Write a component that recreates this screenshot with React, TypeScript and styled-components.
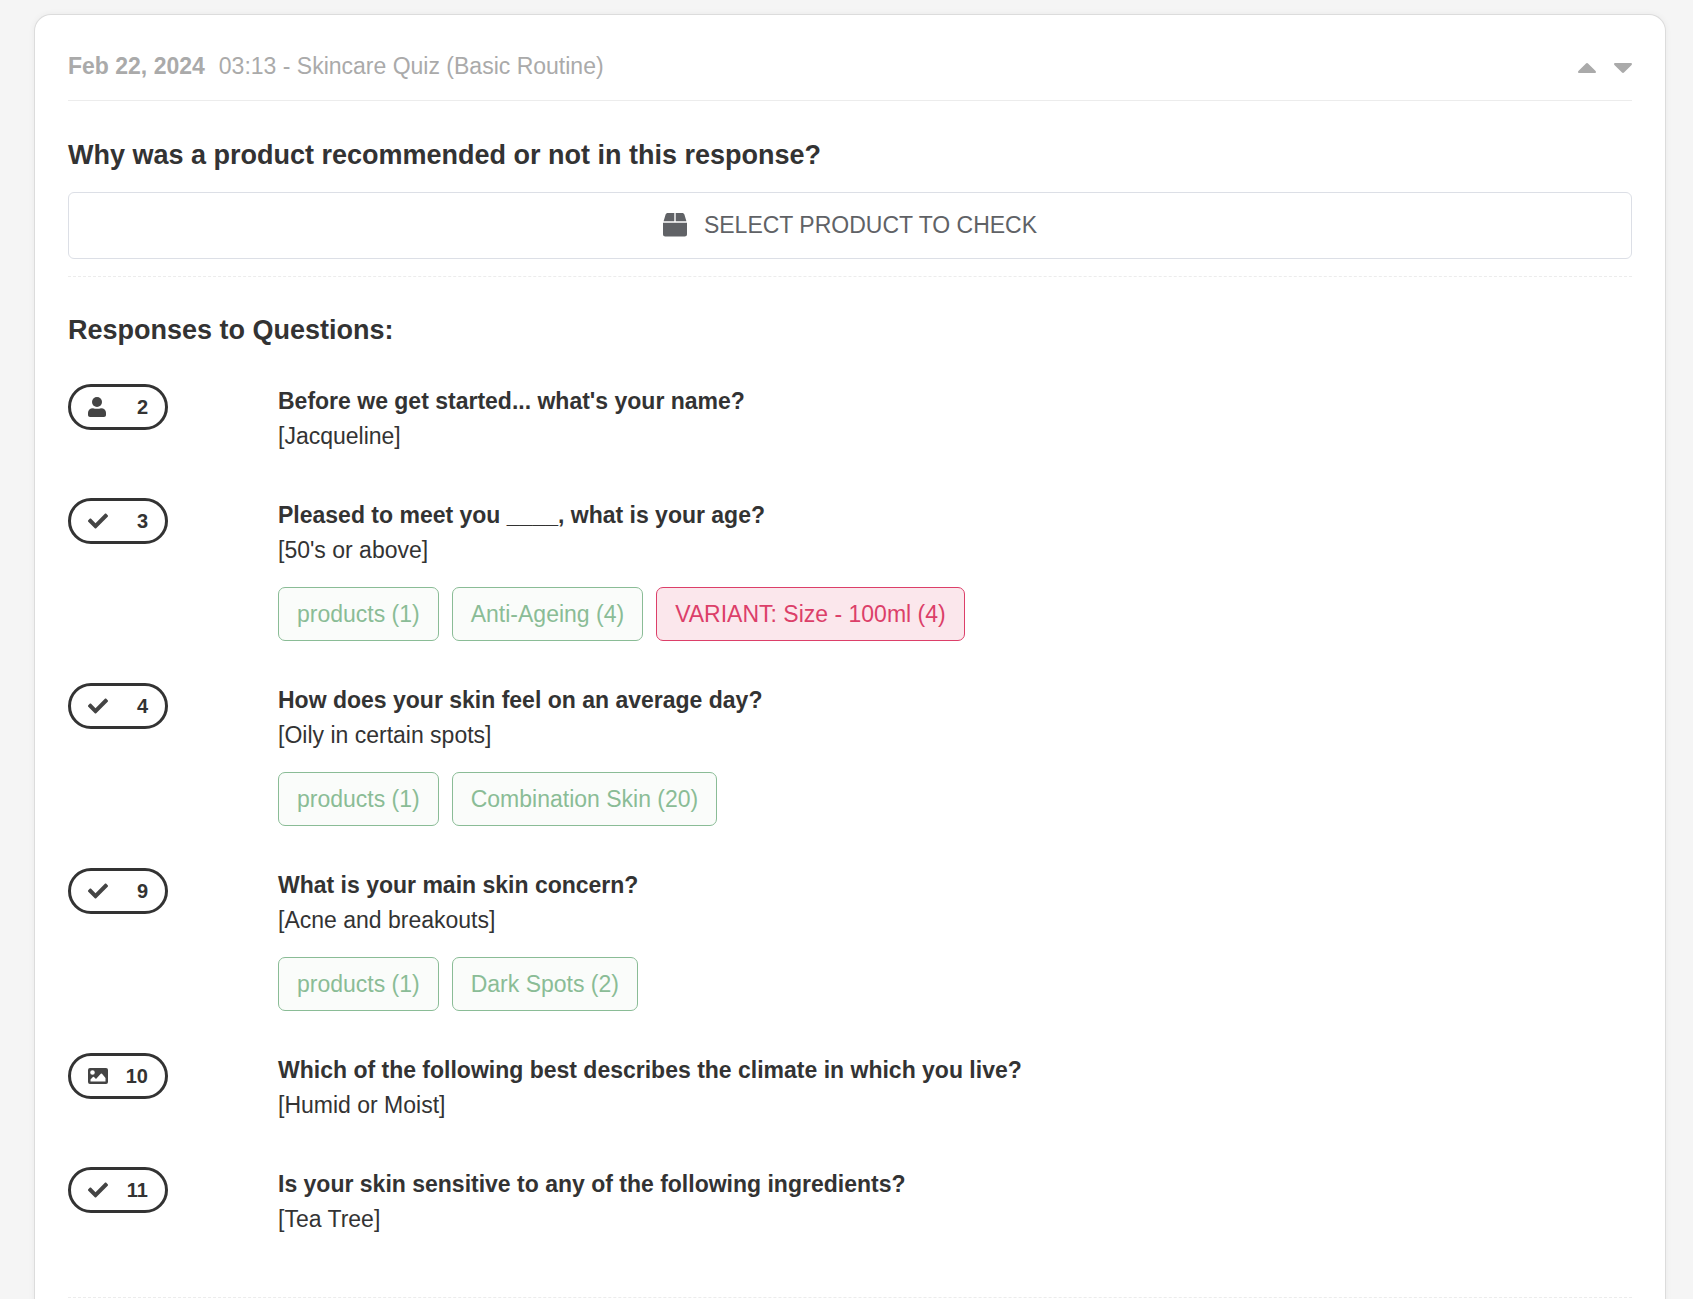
import React from "react";
import styled, { createGlobalStyle, css } from "styled-components";
import { FaCheck } from "react-icons/fa";

const GlobalStyle = createGlobalStyle`
  *, *::before, *::after { box-sizing: border-box; }
  body {
    margin: 0;
    background: #f5f5f5;
    color: #333;
    font-family: "Liberation Sans", Arial, sans-serif;
    font-size: 23px;
    line-height: 35px;
  }
`;

const Page = styled.main`
  padding: 14px 27px 0 34px;
`;

const Card = styled.article`
  padding: 34px 33px 64px;
  background: #fff;
  border: 1px solid #dcdcdc;
  border-bottom: 0;
  border-radius: 17px 17px 0 0;
  box-shadow: 0 0 6px rgba(0, 0, 0, 0.05);
`;

const Header = styled.header`
  display: flex;
  justify-content: space-between;
  align-items: center;
  padding-bottom: 16px;
  border-bottom: 1px solid #ececec;
  color: #aaa;
`;

const Meta = styled.div`
  display: flex;
  gap: 14px;
`;

const Arrows = styled.div`
  display: flex;
  gap: 18px;
`;

const ArrowButton = styled.button`
  display: flex;
  padding: 2px 0 0;
  border: 0;
  background: none;
  color: inherit;
  cursor: pointer;
`;

const Title = styled.h2`
  margin: 0;
  font-size: 27px;
  line-height: 40px;
  font-weight: 700;
`;

const CheckSection = styled.section`
  display: flex;
  flex-direction: column;
  gap: 17px;
  padding: 34px 0 17px;
  border-bottom: 1px dashed #ececec;
`;

const SelectButton = styled.button`
  display: flex;
  align-items: center;
  justify-content: center;
  gap: 17px;
  width: 100%;
  height: 67px;
  border: 1px solid #dcdfe6;
  border-radius: 6px;
  background: #fff;
  color: #606266;
  font: inherit;
  text-transform: uppercase;
  cursor: pointer;
`;

const ResponsesSection = styled.section`
  padding: 33px 0 60px;
  border-bottom: 1px dashed #ececec;
`;

const ResponseList = styled.ol`
  display: flex;
  flex-direction: column;
  gap: 44px;
  margin: 34px 0 0;
  padding: 0;
  list-style: none;
`;

const ResponseRow = styled.li`
  display: grid;
  grid-template-columns: 210px 1fr;
  align-items: start;
`;

const Badge = styled.div`
  display: flex;
  align-items: center;
  justify-content: space-between;
  width: 100px;
  height: 46px;
  padding: 0 17px;
  border: 3px solid #333;
  border-radius: 23px;
  font-size: 20px;
  font-weight: 700;

  svg { color: #444; }
`;

const Question = styled.h3`
  margin: 0;
  font-size: 23px;
  font-weight: 700;
`;

const Answer = styled.p`
  margin: 0;
`;

const Chips = styled.ul`
  display: flex;
  flex-wrap: wrap;
  gap: 13px;
  margin: 19px 0 -2px;
  padding: 0;
  list-style: none;
`;

const Chip = styled.li<{ $variant?: boolean }>`
  padding: 9px 18px 8px;
  border: 1px solid;
  border-radius: 7px;
  ${({ $variant }) =>
    $variant
      ? css`
          border-color: #dc3f69;
          background: #fbe7ec;
          color: #dc3f69;
        `
      : css`
          border-color: #8abc96;
          background: #fafcfa;
          color: #8abc96;
        `}
`;

const CaretUp = () => (
  <svg width="18" height="10" viewBox="0 0 18 10" fill="currentColor" aria-hidden="true">
    <path d="M8 .5a1.4 1.4 0 0 1 2 0l7.6 7.6c.7.8.3 1.9-.8 1.9H1.2C.1 10-.3 8.900.4 8.100z" />
  </svg>
);

const CaretDown = () => (
  <svg width="18" height="10" viewBox="0 0 18 10" fill="currentColor" aria-hidden="true">
    <path d="M8 9.500a1.400 1.400 0 0 0 2 0l7.600-7.600C18.300 1.100 17.900 0 16.800 0H1.200C.1 0-.3 1.100.4 1.900z" />
  </svg>
);

const BoxIcon = () => (
  <svg width="24" height="26" viewBox="0 0 24 26" fill="currentColor" aria-hidden="true">
    <path d="M11.300 0v8.300H.6L2.600 1.600C2.900.6 3.800 0 4.800 0zM12.700 0v8.300h10.700L21.400 1.600C21.100.6 20.200 0 19.200 0zM0 9.700h24v11.600c0 1.300-1 2.300-2.300 2.300H2.300C1 23.600 0 22.600 0 21.300z" />
  </svg>
);

const UserIcon = () => (
  <svg width="18" height="20" viewBox="0 0 18 20" fill="currentColor" aria-hidden="true">
    <circle cx="9" cy="5" r="5" />
    <path d="M5 11.200c1.200.4 2.500.6 4 .6s2.800-.2 4-.6c3 0 5 1.900 5 4.600V18c0 1.100-.9 2-2 2H2c-1.100 0-2-.9-2-2v-2.200c0-2.700 2-4.600 5-4.600z" />
  </svg>
);

const ImageIcon = () => (
  <svg width="20" height="16" viewBox="0 0 20 16" fill="currentColor" aria-hidden="true">
    <path
      fillRule="evenodd"
      d="M2 0h16a2 2 0 0 1 2 2v12a2 2 0 0 1-2 2H2a2 2 0 0 1-2-2V2a2 2 0 0 1 2-2zM4.500 2.200a2.300 2.300 0 1 0 0 4.600 2.300 2.300 0 0 0 0-4.600zM2.500 13.500h15V10L14 5.800a.8.8 0 0 0-1.200 0L8 11 6 9a.8.8 0 0 0-1.100 0l-2.400 2.500z"
    />
  </svg>
);

const icons = {
  user: <UserIcon />,
  check: <FaCheck size={20} aria-hidden="true" />,
  image: <ImageIcon />,
};

type Response = {
  step: number;
  icon: keyof typeof icons;
  question: string;
  answer: string;
  chips?: { label: string; variant?: boolean }[];
};

const responses: Response[] = [
  { step: 2, icon: "user", question: "Before we get started... what's your name?", answer: "[Jacqueline]" },
  {
    step: 3,
    icon: "check",
    question: "Pleased to meet you ____, what is your age?",
    answer: "[50's or above]",
    chips: [
      { label: "products (1)" },
      { label: "Anti-Ageing (4)" },
      { label: "VARIANT: Size - 100ml (4)", variant: true },
    ],
  },
  {
    step: 4,
    icon: "check",
    question: "How does your skin feel on an average day?",
    answer: "[Oily in certain spots]",
    chips: [{ label: "products (1)" }, { label: "Combination Skin (20)" }],
  },
  {
    step: 9,
    icon: "check",
    question: "What is your main skin concern?",
    answer: "[Acne and breakouts]",
    chips: [{ label: "products (1)" }, { label: "Dark Spots (2)" }],
  },
  {
    step: 10,
    icon: "image",
    question: "Which of the following best describes the climate in which you live?",
    answer: "[Humid or Moist]",
  },
  {
    step: 11,
    icon: "check",
    question: "Is your skin sensitive to any of the following ingredients?",
    answer: "[Tea Tree]",
  },
];

export default function App() {
  return (
    <Page>
      <GlobalStyle />
      <Card>
        <Header>
          <Meta>
            <strong>Feb 22, 2024</strong>
            <span>03:13 - Skincare Quiz (Basic Routine)</span>
          </Meta>
          <Arrows>
            <ArrowButton type="button" aria-label="Previous response">
              <CaretUp />
            </ArrowButton>
            <ArrowButton type="button" aria-label="Next response">
              <CaretDown />
            </ArrowButton>
          </Arrows>
        </Header>

        <CheckSection>
          <Title>Why was a product recommended or not in this response?</Title>
          <SelectButton type="button">
            <BoxIcon />
            Select product to check
          </SelectButton>
        </CheckSection>

        <ResponsesSection>
          <Title>Responses to Questions:</Title>
          <ResponseList>
            {responses.map(({ step, icon, question, answer, chips }) => (
              <ResponseRow key={step}>
                <Badge>
                  {icons[icon]}
                  {step}
                </Badge>
                <div>
                  <Question>{question}</Question>
                  <Answer>{answer}</Answer>
                  {chips && (
                    <Chips>
                      {chips.map(({ label, variant }) => (
                        <Chip key={label} $variant={variant}>
                          {label}
                        </Chip>
                      ))}
                    </Chips>
                  )}
                </div>
              </ResponseRow>
            ))}
          </ResponseList>
        </ResponsesSection>
      </Card>
    </Page>
  );
}
